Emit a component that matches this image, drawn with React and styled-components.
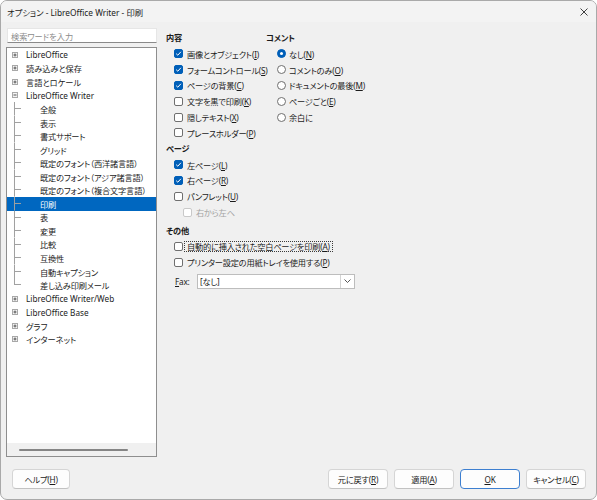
import React from 'react';
import styled, { createGlobalStyle } from 'styled-components';

const GlobalStyle = createGlobalStyle`
  html, body { margin: 0; padding: 0; background: #ffffff; }
  body {
    font-family: "Noto Sans", "Noto Sans CJK JP", sans-serif;
    font-size: 8.2px;
    color: #1b1b1b;
    font-feature-settings: "palt";
  }
  * { box-sizing: border-box; }
`;

const Window = styled.div`
  width: 597px;
  height: 500px;
  display: flex;
  flex-direction: column;
  background: #f0f0f0;
  border: 1px solid #a9a9a9;
  border-radius: 7px;
  overflow: hidden;
`;

const TitleBar = styled.div`
  height: 21px;
  flex: none;
  display: flex;
  align-items: center;
  justify-content: space-between;
  padding: 0 7px 0 6px;
  background: #f3f3f3;
`;

const Title = styled.span`
  font-size: 8.3px;
  color: #1a1a1a;
`;

const CloseButton = styled.span`
  display: flex;
  width: 10px;
  height: 10px;
  align-items: center;
  justify-content: center;
`;

const Main = styled.div`
  flex: 1;
  display: flex;
  min-height: 0;
`;

const LeftPane = styled.div`
  width: 156px;
  flex: none;
  display: flex;
  flex-direction: column;
  padding: 6px 0 0 5px;
`;

const Search = styled.div`
  height: 15px;
  margin-left: 1px;
  background: #ffffff;
  border: 1px solid #e6e6e6;
  border-bottom-color: #8a8a8a;
  display: flex;
  align-items: center;
  padding-left: 3px;
  color: #8c8c8c;
`;

const TreeBox = styled.div`
  flex: 1;
  margin-top: 4px;
  display: flex;
  flex-direction: column;
  background: #ffffff;
  border: 1px solid #8e8e8e;
  min-height: 0;
`;

const TreeList = styled.div`
  flex: 1;
  display: flex;
  flex-direction: column;
`;

const TreeRow = styled.div`
  height: 13.55px;
  flex: none;
  display: flex;
  align-items: center;
  padding-left: ${(p) => (p.$child ? 0 : 5)}px;
  background: ${(p) => (p.$selected ? '#0067c0' : 'transparent')};
  color: ${(p) => (p.$selected ? '#ffffff' : '#1b1b1b')};
  white-space: nowrap;
`;

const TreeLabel = styled.span`
  margin-left: ${(p) => (p.$child ? 19 : 8)}px;
  letter-spacing: ${(p) => (p.$child ? -0.15 : 0)}px;
`;

const HScroll = styled.div`
  height: 13px;
  flex: none;
  background: #f0f0f0;
  padding: 6px 0 0 12px;
`;

const HThumb = styled.div`
  width: 109px;
  height: 2px;
  border-radius: 1px;
  background: #858585;
`;

const RightPane = styled.div`
  flex: 1;
  padding: 8px 0 0 9px;
  display: flex;
  flex-direction: column;
  letter-spacing: -0.2px;
`;

const TopGrid = styled.div`
  display: grid;
  grid-template-columns: 100px 1fr;
`;

const Column = styled.div`
  display: flex;
  flex-direction: column;
`;

const Section = styled.div`
  display: flex;
  flex-direction: column;
  margin-top: ${(p) => p.$gap || 0}px;
`;

const Heading = styled.div`
  height: 16px;
  line-height: 16px;
  font-weight: bold;
  color: #1a1a1a;
`;

const Option = styled.div`
  height: ${(p) => p.$h || 15.8}px;
  display: flex;
  align-items: center;
  gap: ${(p) => (p.$focus ? 1 : 4)}px;
  padding-left: ${(p) => p.$indent ?? 8}px;
  color: ${(p) => (p.$disabled ? '#a3a3a3' : '#1b1b1b')};
  white-space: nowrap;
`;

const Box = styled.span`
  width: 9px;
  height: 9px;
  flex: none;
  border-radius: 2px;
  display: flex;
  align-items: center;
  justify-content: center;
  background: ${(p) => (p.$checked ? '#005fb8' : '#ffffff')};
  border: 1px solid
    ${(p) => (p.$checked ? '#005fb8' : p.$disabled ? '#c9c9c9' : '#6f6f6f')};
`;

const Radio = styled.span`
  width: 9px;
  height: 9px;
  flex: none;
  border-radius: 50%;
  display: flex;
  align-items: center;
  justify-content: center;
  background: ${(p) => (p.$on ? '#005fb8' : '#ffffff')};
  border: 1px solid ${(p) => (p.$on ? '#005fb8' : '#6f6f6f')};
  margin-right: -1px;
`;

const Dot = styled.span`
  width: 3px;
  height: 3px;
  border-radius: 50%;
  background: #ffffff;
`;

const FocusText = styled.span`
  border: 1px dotted #3a3a3a;
  padding: 0 2px;
  line-height: 9px;
`;

const U = styled.span`
  text-decoration: underline;
  text-underline-offset: 1px;
`;

const FaxRow = styled.div`
  display: flex;
  align-items: center;
  margin-top: 4px;
  padding-left: 9px;
`;

const FaxLabel = styled.span`
  width: 22px;
`;

const Select = styled.div`
  width: 158px;
  height: 15px;
  display: flex;
  align-items: center;
  background: #ffffff;
  border: 1px solid #bdbdbd;
`;

const SelectValue = styled.span`
  flex: 1;
  padding-left: 2px;
`;

const SelectArrow = styled.span`
  width: 14px;
  height: 100%;
  display: flex;
  align-items: center;
  justify-content: center;
  border-left: 1px solid #d4d4d4;
`;

const Footer = styled.div`
  height: 42px;
  flex: none;
  display: flex;
  justify-content: space-between;
  align-items: flex-start;
  padding: 12px 10px 0 11px;
`;

const ButtonGroup = styled.div`
  display: flex;
  gap: 6px;
`;

const Button = styled.div`
  width: ${(p) => p.$w || 60}px;
  height: 20px;
  display: flex;
  align-items: center;
  justify-content: center;
  background: #fdfdfd;
  border: 1px solid ${(p) => (p.$default ? '#3d7fd0' : '#d5d5d5')};
  border-bottom-color: ${(p) => (p.$default ? '#3d7fd0' : '#c2c2c2')};
  border-radius: 4px;
  color: #1b1b1b;
  letter-spacing: -0.2px;
`;

const Expander = ({ open }) => (
  <svg width="6" height="6" viewBox="0 0 6 6" style={{ flex: 'none' }}>
    <rect x="0.5" y="0.5" width="5" height="5" fill="#f4f4f4" stroke="#a8a8a8" />
    <line x1="1.5" y1="3" x2="4.5" y2="3" stroke="#555" strokeWidth="1" />
    {!open && <line x1="3" y1="1.5" x2="3" y2="4.5" stroke="#555" strokeWidth="1" />}
  </svg>
);

const Connector = ({ last }) => (
  <svg width="14" height="13.55" viewBox="0 0 14 13.55" style={{ flex: 'none' }}>
    <line x1="7.5" y1="0" x2="7.5" y2={last ? 7 : 13.55} stroke="#a0a0a0" />
    <line x1="7.5" y1="6.5" x2="14" y2="6.5" stroke="#a0a0a0" />
  </svg>
);

const Check = () => (
  <svg width="7" height="7" viewBox="0 0 7 7">
    <path d="M1.2 3.7 L2.8 5.2 L5.9 1.8" fill="none" stroke="#ffffff" strokeWidth="1" />
  </svg>
);

const Label = ({ text, k }) => (
  <span>
    {text}
    {k && (
      <>
        (<U>{k}</U>)
      </>
    )}
  </span>
);

const CheckOption = ({ checked, disabled, text, k, indent, focus, h }) => (
  <Option $disabled={disabled} $indent={indent} $focus={focus} $h={h}>
    <Box $checked={checked} $disabled={disabled}>
      {checked && <Check />}
    </Box>
    {focus ? (
      <FocusText>
        <Label text={text} k={k} />
      </FocusText>
    ) : (
      <Label text={text} k={k} />
    )}
  </Option>
);

const RadioOption = ({ on, text, k }) => (
  <Option $indent={11}>
    <Radio $on={on}>{on && <Dot />}</Radio>
    <Label text={text} k={k} />
  </Option>
);

const writerPages = [
  '全般',
  '表示',
  '書式サポート',
  'グリッド',
  '既定のフォント（西洋諸言語）',
  '既定のフォント（アジア諸言語）',
  '既定のフォント（複合文字言語）',
  '印刷',
  '表',
  '変更',
  '比較',
  '互換性',
  '自動キャプション',
  '差し込み印刷メール',
];

const Tree = () => (
  <TreeBox>
    <TreeList>
      {['LibreOffice', '読み込みと保存', '言語とロケール'].map((t) => (
        <TreeRow key={t}>
          <Expander />
          <TreeLabel>{t}</TreeLabel>
        </TreeRow>
      ))}
      <TreeRow>
        <Expander open />
        <TreeLabel>LibreOffice Writer</TreeLabel>
      </TreeRow>
      {writerPages.map((t, i) => (
        <TreeRow key={t} $child $selected={t === '印刷'}>
          <Connector last={i === writerPages.length - 1} />
          <TreeLabel $child>{t}</TreeLabel>
        </TreeRow>
      ))}
      {['LibreOffice Writer/Web', 'LibreOffice Base', 'グラフ', 'インターネット'].map((t) => (
        <TreeRow key={t}>
          <Expander />
          <TreeLabel>{t}</TreeLabel>
        </TreeRow>
      ))}
    </TreeList>
    <HScroll>
      <HThumb />
    </HScroll>
  </TreeBox>
);

export default function App() {
  return (
    <>
      <GlobalStyle />
      <Window>
        <TitleBar>
          <Title>オプション - LibreOffice Writer - 印刷</Title>
          <CloseButton>
            <svg width="8" height="8" viewBox="0 0 8 8">
              <path d="M0.5 0.5 L7.5 7.5 M7.5 0.5 L0.5 7.5" stroke="#2b2b2b" strokeWidth="0.9" />
            </svg>
          </CloseButton>
        </TitleBar>
        <Main>
          <LeftPane>
            <Search>検索ワードを入力</Search>
            <Tree />
          </LeftPane>
          <RightPane>
            <TopGrid>
              <Column>
                <Section>
                  <Heading>内容</Heading>
                  <CheckOption checked text="画像とオブジェクト" k="I" />
                  <CheckOption checked text="フォームコントロール" k="S" />
                  <CheckOption checked text="ページの背景" k="C" />
                  <CheckOption text="文字を黒で印刷" k="K" />
                  <CheckOption text="隠しテキスト" k="X" />
                  <CheckOption text="プレースホルダー" k="P" />
                </Section>
                <Section>
                  <Heading>ページ</Heading>
                  <CheckOption checked text="左ページ" k="L" />
                  <CheckOption checked text="右ページ" k="R" />
                  <CheckOption text="パンフレット" k="U" />
                  <CheckOption disabled indent={17} text="右から左へ" />
                </Section>
              </Column>
              <Column>
                <Section>
                  <Heading>コメント</Heading>
                  <RadioOption on text="なし" k="N" />
                  <RadioOption text="コメントのみ" k="O" />
                  <RadioOption text="ドキュメントの最後" k="M" />
                  <RadioOption text="ページごと" k="E" />
                  <RadioOption text="余白に" />
                </Section>
              </Column>
            </TopGrid>
            <Section $gap={3}>
              <Heading>その他</Heading>
              <CheckOption focus h={15.5} text="自動的に挿入された空白ページを印刷" k="A" />
              <CheckOption h={15.5} text="プリンター設定の用紙トレイを使用する" k="P" />
            </Section>
            <FaxRow>
              <FaxLabel>
                <U>F</U>ax:
              </FaxLabel>
              <Select>
                <SelectValue>[なし]</SelectValue>
                <SelectArrow>
                  <svg width="7" height="4" viewBox="0 0 7 4">
                    <path d="M0.5 0.5 L3.5 3.5 L6.5 0.5" fill="none" stroke="#444" strokeWidth="0.9" />
                  </svg>
                </SelectArrow>
              </Select>
            </FaxRow>
          </RightPane>
        </Main>
        <Footer>
          <Button $w={58}>
            ヘルプ(<U>H</U>)
          </Button>
          <ButtonGroup>
            <Button>
              元に戻す(<U>R</U>)
            </Button>
            <Button>
              適用(<U>A</U>)
            </Button>
            <Button $default>
              <U>O</U>K
            </Button>
            <Button>
              キャンセル(<U>C</U>)
            </Button>
          </ButtonGroup>
        </Footer>
      </Window>
    </>
  );
}
